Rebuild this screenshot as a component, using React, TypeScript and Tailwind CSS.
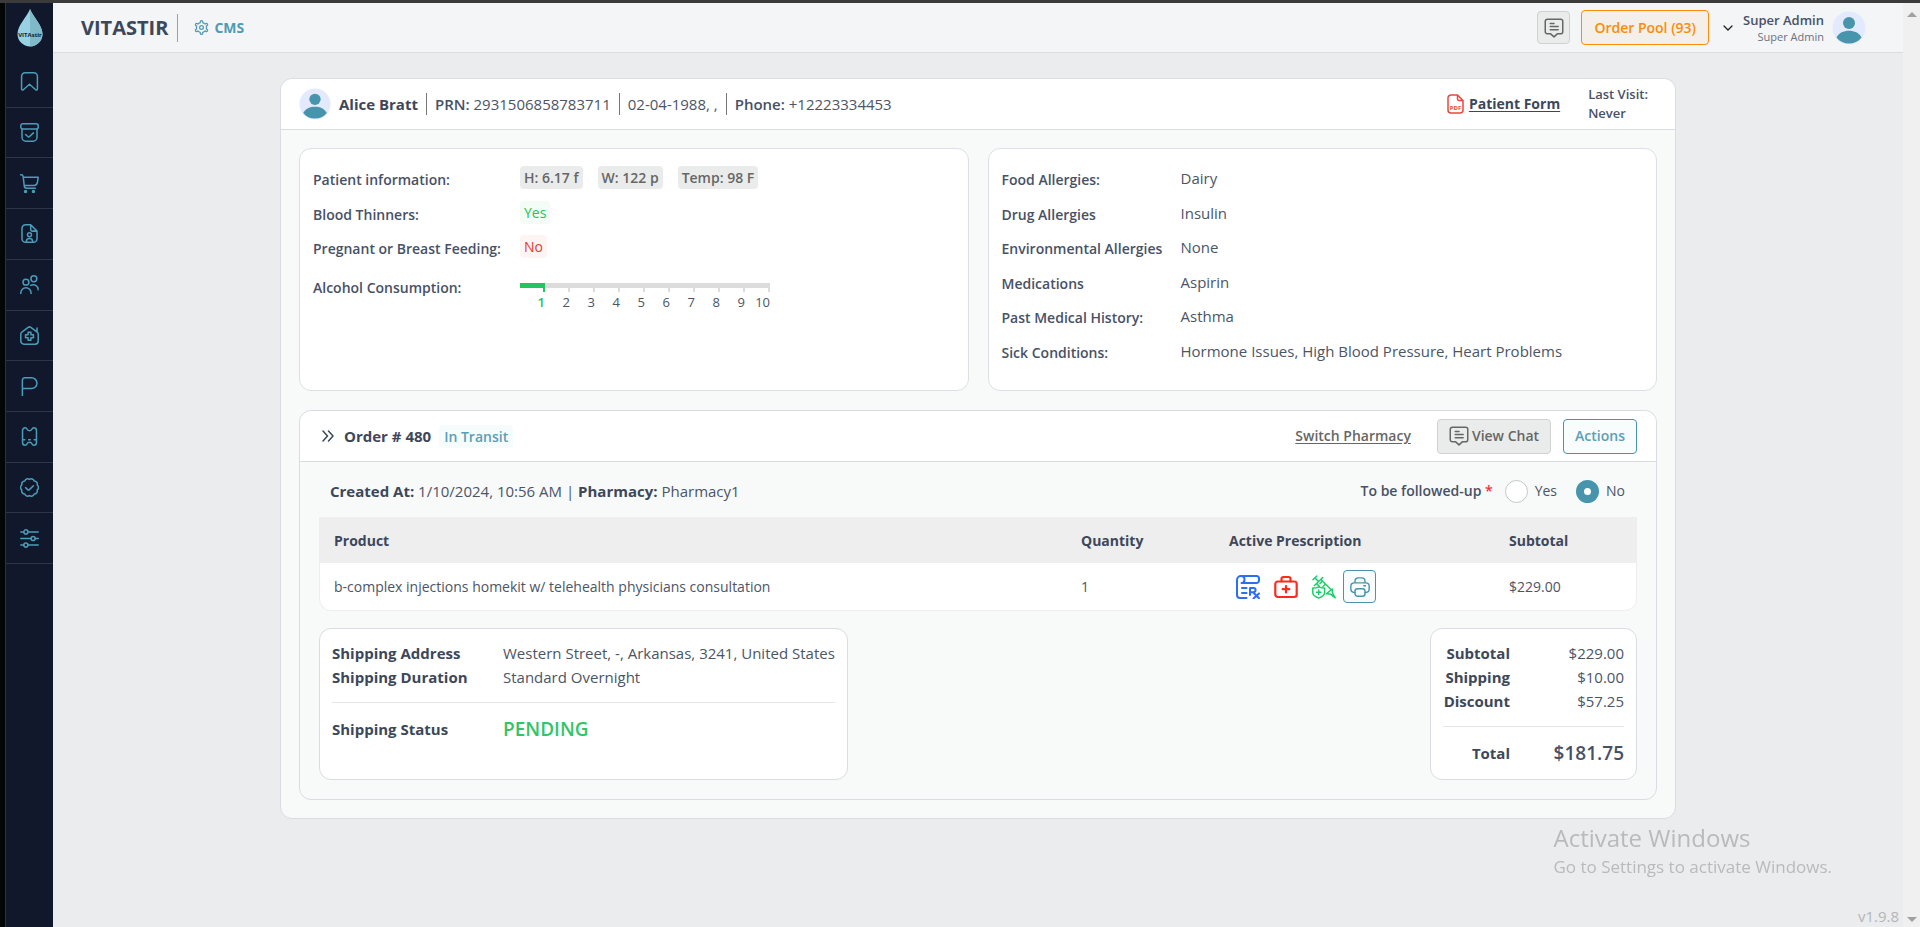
import type { ReactNode } from "react";

const scallops = (() => {
  const count = 10;
  const points = Array.from({ length: count }, (_, i) => {
    const a = (Math.PI * 2 * (i + 0.5)) / count;
    return `${(12 + 10.2 * Math.cos(a)).toFixed(2)} ${(12 + 10.2 * Math.sin(a)).toFixed(2)}`;
  });
  return `M${points[count - 1]}` + points.map((p) => `A3.9 3.9 0 0 1 ${p}`).join("") + "Z";
})();

function Line({ children, className = "size-[19px]", width = 1.9 }: { children: ReactNode; className?: string; width?: number }) {
  return (
    <svg
      viewBox="0 0 24 24"
      className={className}
      fill="none"
      stroke="currentColor"
      strokeWidth={width}
      strokeLinecap="round"
      strokeLinejoin="round"
      aria-hidden="true"
    >
      {children}
    </svg>
  );
}

const navItems: { label: string; icon: ReactNode }[] = [
  {
    label: "Bookmarks",
    icon: <path d="M2 5.500a4.500 4.500 0 0 1 4.500-4.500h11a4.500 4.500 0 0 1 4.500 4.500v16a1.300 1.300 0 0 1-2.200.900L12 15.500l-7.800 6.900A1.300 1.300 0 0 1 2 21.500z" />,
  },
  {
    label: "Orders",
    icon: (
      <>
        <rect x="1" y="1" width="22" height="6.500" rx="2.500" />
        <path d="M2.500 7.500V18a5 5 0 0 0 5 5h9a5 5 0 0 0 5-5V7.500M7 14.500l2.800 2.600a1.600 1.600 0 0 0 2.200 0l5-4.600" />
      </>
    ),
  },
  {
    label: "Cart",
    icon: (
      <>
        <path d="M.8 1h.6a2.600 2.600 0 0 1 2.600 2.300l1.400 11.900A2.900 2.900 0 0 0 8.300 18H19.500M4.200 4H23l-1 6.500a4.500 4.500 0 0 1-4.400 3.900H5.400" />
        <circle cx="7" cy="22.200" r="1.200" fill="currentColor" />
        <circle cx="17" cy="22.200" r="1.200" fill="currentColor" />
      </>
    ),
  },
  {
    label: "Patient files",
    icon: (
      <>
        <path d="M13.500 1H7a4.500 4.500 0 0 0-4.500 4.500v13A4.500 4.500 0 0 0 7 23h10a4.500 4.500 0 0 0 4.500-4.500V9zM13.500 1v5.500A2.500 2.500 0 0 0 16 9h5.500" />
        <circle cx="12" cy="13.700" r="2.500" />
        <path d="M8 23v-.600a4 4 0 0 1 8 0v.600" />
      </>
    ),
  },
  {
    label: "Users",
    icon: (
      <>
        <circle cx="7.500" cy="9" r="3.700" />
        <path d="M1 23.500v-.800a6.500 6.500 0 0 1 13 0v.800M13.600 13.200a6.200 6.200 0 0 1 9.400 5.300" />
        <circle cx="17.500" cy="4.700" r="3.700" />
      </>
    ),
  },
  {
    label: "Clinics",
    icon: (
      <>
        <path d="M1 10.500a4 4 0 0 1 1.700-3.200l7.600-5.600a3 3 0 0 1 3.400 0l7.600 5.600A4 4 0 0 1 23 10.500V19a4 4 0 0 1-4 4H5a4 4 0 0 1-4-4zM21.500 7.200V2.500" />
        <path d="M10.200 8h3.600v3.200H17v3.600h-3.200V18h-3.600v-3.200H7v-3.600h3.200z" />
      </>
    ),
  },
  { label: "Pharmacies", icon: <path d="M3 23.500V4a3 3 0 0 1 3-3h8.600a6.800 6.800 0 0 1 0 13.600H3" /> },
  {
    label: "Coupons",
    icon: (
      <>
        <path d="M3.200 4.500C3.200 2.500 4.700 1 6.500 1c1 0 1.900.600 2.300 1.500a3.500 3.500 0 0 0 6.400 0C15.600 1.600 16.500 1 17.500 1c1.800 0 3.300 1.500 3.300 3.500v15c0 2-1.500 3.500-3.300 3.500-1 0-1.900-.600-2.300-1.500a3.500 3.500 0 0 0-6.400 0C8.400 22.400 7.500 23 6.500 23c-1.800 0-3.300-1.500-3.300-3.500z" />
        <path d="M3.500 16h2.500M11 16h2M18 16h2.500" />
      </>
    ),
  },
  {
    label: "Approvals",
    icon: (
      <>
        <path d={scallops} />
        <path d="M7 12.200l2.700 2.500a1.600 1.600 0 0 0 2.200 0l5.100-4.900" />
      </>
    ),
  },
  {
    label: "Settings",
    icon: (
      <>
        <path d="M1 3.700h3.800M10 3.700h13M1 12h13M19.200 12H23M1 20.300h3.800M10 20.300h13" />
        <circle cx="7.400" cy="3.700" r="2.600" />
        <circle cx="16.600" cy="12" r="2.600" />
        <circle cx="7.400" cy="20.300" r="2.600" />
      </>
    ),
  },
];

function Logo() {
  return (
    <svg viewBox="0 0 26 38" className="h-[38px] w-[26px] overflow-visible" role="img" aria-label="VITAstir">
      <path d="M13 0C10 7.500.5 16.500.5 25a12.500 12.500 0 0 0 25 0C25.500 16.500 16 7.500 13 0z" fill="#97d1e3" />
      <path d="M13 0c3 7.500 12.500 16.500 12.500 25A12.500 12.500 0 0 1 13 37.500z" fill="#7fb9c8" />
      <text x="13" y="28" textAnchor="middle" fontSize="6" fontWeight="700" fill="#14222b" fontFamily="Open Sans, sans-serif">
        VITAstir
      </text>
    </svg>
  );
}

function Gear() {
  return (
    <svg viewBox="0 0 24 24" className="size-[15px]" fill="currentColor" aria-hidden="true">
      <path d="M12,8a4,4,0,1,0,4,4A4,4,0,0,0,12,8Zm0,6a2,2,0,1,1,2-2A2,2,0,0,1,12,14Z" />
      <path d="M21.294,13.9l-.444-.256a9.1,9.1,0,0,0,0-3.29l.444-.256a3,3,0,1,0-3-5.2l-.445.257A8.977,8.977,0,0,0,15,3.513V3A3,3,0,0,0,9,3v.513A8.977,8.977,0,0,0,6.152,5.159L5.705,4.9a3,3,0,0,0-3,5.2l.444.256a9.1,9.1,0,0,0,0,3.29l-.444.256a3,3,0,1,0,3,5.2l.445-.257A8.977,8.977,0,0,0,9,20.487V21a3,3,0,0,0,6,0v-.513a8.977,8.977,0,0,0,2.848-1.646l.447.258a3,3,0,0,0,3-5.2Zm-2.548-3.776a7.048,7.048,0,0,1,0,3.75,1,1,0,0,0,.464,1.133l1.084.626a1,1,0,0,1-1,1.733l-1.086-.628a1,1,0,0,0-1.215.165,6.984,6.984,0,0,1-3.243,1.875,1,1,0,0,0-.751.969V21a1,1,0,0,1-2,0V19.748a1,1,0,0,0-.751-.969A6.984,6.984,0,0,1,7.006,16.9a1,1,0,0,0-1.215-.165l-1.084.627a1,1,0,1,1-1-1.732l1.084-.626a1,1,0,0,0,.464-1.133,7.048,7.048,0,0,1,0-3.75A1,1,0,0,0,4.79,8.992L3.706,8.366a1,1,0,0,1,1-1.733l1.086.628A1,1,0,0,0,7.006,7.1a6.984,6.984,0,0,1,3.243-1.875A1,1,0,0,0,11,4.252V3a1,1,0,0,1,2,0V4.252a1,1,0,0,0,.751.969A6.984,6.984,0,0,1,16.994,7.1a1,1,0,0,0,1.215.165l1.084-.627a1,1,0,1,1,1,1.732l-1.084.626A1,1,0,0,0,18.746,10.125Z" />
    </svg>
  );
}

function ChatIcon() {
  return (
    <Line className="size-5 shrink-0" width={1.8}>
      <path d="M4 1.500h16A2.500 2.500 0 0 1 22.500 4v12.500a2.500 2.500 0 0 1-2.500 2.500H16L12 22.700 8 19H4a2.500 2.500 0 0 1-2.500-2.500V4A2.500 2.500 0 0 1 4 1.500z" />
      <path d="M7.500 6.500h4.500M7.500 10.200h9.500M7.500 14h9.500" />
    </Line>
  );
}

function Avatar({ className }: { className: string }) {
  return (
    <svg viewBox="0 0 34 34" className={className} role="img" aria-label="Avatar">
      <circle cx="17" cy="17" r="16.500" fill="#e4eafe" />
      <circle cx="17" cy="12" r="6" fill="#4795ad" />
      <path d="M4.500 26.500C7 21.800 11.500 19.800 17 19.800s10 2 12.500 6.700C26.500 30.500 22 32.500 17 32.500S7.500 30.500 4.500 26.500z" fill="#4795ad" />
    </svg>
  );
}

function PdfIcon() {
  return (
    <svg viewBox="0 0 17 20" className="h-5 w-[17px]" fill="none" stroke="#e8483f" strokeWidth="1.500" strokeLinejoin="round" aria-hidden="true">
      <path d="M10.500 1H4a3 3 0 0 0-3 3v12a3 3 0 0 0 3 3h9a3 3 0 0 0 3-3V6.500zM10.500 1v4A1.500 1.500 0 0 0 12 6.500h4" />
      <text x="8.500" y="15.500" textAnchor="middle" fontSize="6" fontWeight="700" fill="#e8483f" stroke="none" fontFamily="Open Sans, sans-serif">
        PDF
      </text>
    </svg>
  );
}

function RxIcon() {
  return (
    <Line className="size-6" width={2}>
      <path d="M5 1h15.500a2.500 2.500 0 0 1 2.500 3v1.500A2.700 2.700 0 0 1 20.300 8H7.500M5 1A4 4 0 0 0 1 5v15a3 3 0 0 0 3 3h6.500M5 1c2.500 0 3.500 1.500 3.500 3.500S7.500 8 5.500 8" />
      <path d="M6 13h4.500M6 18h4.500M14 20v-7h3.500a2 2 0 0 1 0 4.200H14M17 17.200l6 6M23 18.500l-5.500 5" />
    </Line>
  );
}

function KitIcon() {
  return (
    <Line className="size-6" width={2.2}>
      <rect x="1.300" y="6.500" width="21.400" height="15.500" rx="2.500" />
      <path d="M7.500 6.500V4A2 2 0 0 1 9.500 2h5a2 2 0 0 1 2 2v2.500M12 11v6.500M8.700 14.200h6.600" />
    </Line>
  );
}

function SyringeIcon() {
  return (
    <Line className="size-6" width={1.500}>
      <path d="M1 4.800L4.800 1M2.900 2.900l3.600 3.600M2.500 10.500l8.300-8M4.500 8.600l2.800 2.600M8.800 4.500l10.700 10.500M10 6.500L8 8.500M13 9.500l-2 2M14.300 18.800l6-4.800M14.500 18.600l4 .600 4.700 3.600-2.700-4.800-.400-3.800" />
      <path d="M6.700 11.800c-1.900 1-3.800 1.300-5.900 1.300v4.400c0 2.900 2.900 4.500 5.900 5.600 3-1.100 5.900-2.700 5.900-5.600v-4.400c-2.100 0-4-.300-5.900-1.300zM6.700 15v4.600M4.400 17.300H9" />
    </Line>
  );
}

function PrinterIcon() {
  return (
    <Line className="size-5" width={1.700}>
      <path d="M6 7V5a4 4 0 0 1 4-4h4a4 4 0 0 1 4 4v2M6 18.500H5a4 4 0 0 1-4-4V11a4 4 0 0 1 4-4h14a4 4 0 0 1 4 4v3.500a4 4 0 0 1-4 4h-1" />
      <rect x="6" y="14" width="12" height="9" rx="3" />
      <path d="M16.500 10.500h2" />
    </Line>
  );
}

const allergies = [
  ["Food Allergies:", "Dairy"],
  ["Drug Allergies", "Insulin"],
  ["Environmental Allergies", "None"],
  ["Medications", "Aspirin"],
  ["Past Medical History:", "Asthma"],
  ["Sick Conditions:", "Hormone Issues, High Blood Pressure, Heart Problems"],
];

const levels = [1, 2, 3, 4, 5, 6, 7, 8, 9, 10];

function Chip({ tone, children }: { tone: string; children: ReactNode }) {
  return <span className={`rounded px-1 text-sm leading-[23px] ${tone}`}>{children}</span>;
}

function PatientPanel() {
  return (
    <section className="grid grid-cols-[207px_1fr] content-start rounded-xl border border-[#dcdfe3] bg-white px-[13px] pt-[14px] text-sm">
      <span className="pt-[7px] font-semibold text-[#475166]">Patient information:</span>
      <div className="flex h-[35px] items-start gap-[15px] pt-[3px]">
        <Chip tone="bg-[#eaeceb] font-semibold text-[#666]">H: 6.17 f</Chip>
        <Chip tone="bg-[#eaeceb] font-semibold text-[#666]">W: 122 p</Chip>
        <Chip tone="bg-[#eaeceb] font-semibold text-[#666]">Temp: 98 F</Chip>
      </div>
      <span className="pt-[7px] font-semibold text-[#475166]">Blood Thinners:</span>
      <div className="flex h-[34px] items-start pt-[3px]">
        <Chip tone="bg-[#f3fcf7] text-[#22c55e]">Yes</Chip>
      </div>
      <span className="pt-[7px] font-semibold text-[#475166]">Pregnant or Breast Feeding:</span>
      <div className="flex h-[35px] items-start pt-[3px]">
        <Chip tone="bg-[#fef4f3] text-[#e23b30]">No</Chip>
      </div>
      <span className="pt-[11px] font-semibold text-[#475166]">Alcohol Consumption:</span>
      <ol className="flex pt-4">
        {levels.map((n) => (
          <li key={n} className="w-[25px]">
            <div className={n === 1 ? "h-[5px] bg-[#22c55e]" : "h-[5px] bg-[#dcdcdc]"} />
            <div className={n === 1 ? "h-1 border-r-2 border-[#22c55e]" : "h-1 border-r-2 border-[#dcdcdc]"} />
            <div className={n === 1 ? "text-right text-[13px] leading-5 font-semibold text-[#22c55e]" : "text-right text-[13px] leading-5 text-[#4b5565]"}>
              {n}
            </div>
          </li>
        ))}
      </ol>
    </section>
  );
}

function AllergyPanel() {
  return (
    <section className="rounded-xl border border-[#dcdfe3] bg-white px-[13px] pt-[14px] pb-5">
      <dl className="grid h-[207px] auto-rows-fr grid-cols-[179px_1fr]">
        {allergies.map(([label, value]) => (
          <div key={label} className="contents">
            <dt className="pt-[7px] text-sm font-semibold text-[#475166]">{label}</dt>
            <dd className="pt-1 text-[15px] leading-[22px] text-[#4b5565]">{value}</dd>
          </div>
        ))}
      </dl>
    </section>
  );
}

function Radio({ label, checked }: { label: string; checked?: boolean }) {
  return (
    <label className="flex items-center gap-[7px] text-sm text-[#4b5565]">
      <input
        type="radio"
        name="follow-up"
        defaultChecked={checked}
        className="size-[23px] appearance-none rounded-full border border-[#c4c7ca] bg-white checked:border-8 checked:border-[#4795ad]"
      />
      {label}
    </label>
  );
}

function OrderPanel() {
  return (
    <section className="mt-[19px] rounded-xl border border-[#d9dce1] bg-[#f8faf9]">
      <div className="flex h-[51px] items-center rounded-t-xl border-b border-[#d9dce1] bg-white pr-[19px] pl-[21px]">
        <button type="button" aria-label="Collapse order" className="text-[#3d475a]">
          <svg viewBox="0 0 14 12" className="h-3 w-[14px]" fill="none" stroke="currentColor" strokeWidth="1.500" strokeLinecap="round" strokeLinejoin="round">
            <path d="M2 1l4.500 5L2 11M7.500 1L12 6l-4.500 5" />
          </svg>
        </button>
        <h2 className="ml-[9px] text-[15px] font-bold">Order # 480</h2>
        <span className="ml-2 rounded bg-[#f6fbfc] px-[5px] text-sm leading-[23px] font-semibold text-[#5a9fb5]">In Transit</span>
        <div className="ml-auto flex items-center">
          <a href="#switch" className="mr-[26px] text-sm font-semibold text-[#666] underline underline-offset-2">
            Switch Pharmacy
          </a>
          <button type="button" className="mr-3 flex h-[35px] items-center gap-[3px] rounded border border-[#cfd2d1] bg-[#eaeceb] px-[11px] text-sm font-semibold text-[#666]">
            <ChatIcon />
            View Chat
          </button>
          <button type="button" className="h-[35px] rounded border border-[#4795ad] bg-[#f8fcfd] px-[11px] text-sm font-semibold text-[#5a9fb5]">
            Actions
          </button>
        </div>
      </div>

      <div className="px-[19px] pb-[19px]">
        <div className="flex h-[55px] items-center justify-between pt-[3px] pr-3 pl-[11px]">
          <p className="text-[15px] text-[#4b5565]">
            <b className="font-bold text-[#3d475a]">Created At:</b> 1/10/2024, 10:56 AM | <b className="font-bold text-[#3d475a]">Pharmacy:</b> Pharmacy1
          </p>
          <div role="radiogroup" aria-labelledby="follow-up-label" className="flex items-center gap-[19px]">
            <div className="flex items-center gap-3">
              <span id="follow-up-label" className="text-sm font-semibold text-[#475166]">
                To be followed-up <span className="text-red-500">*</span>
              </span>
              <Radio label="Yes" />
            </div>
            <Radio label="No" checked />
          </div>
        </div>

        <div className="overflow-hidden rounded-b-xl border border-[#eeeeee] bg-white">
          <table className="w-full table-fixed text-left text-sm">
            <thead className="bg-[#eeeeee]">
              <tr className="h-[45px]">
                <th className="px-[14px] font-bold">Product</th>
                <th className="w-[148px] px-[14px] font-bold">Quantity</th>
                <th className="w-[280px] px-[14px] font-bold">Active Prescription</th>
                <th className="w-[141px] px-[14px] font-bold">Subtotal</th>
              </tr>
            </thead>
            <tbody className="text-[#4b5565]">
              <tr className="h-[47px]">
                <td className="px-[14px]">b-complex injections homekit w/ telehealth physicians consultation</td>
                <td className="px-[14px]">1</td>
                <td className="px-[14px]">
                  <div className="flex items-center pl-[7px]">
                    <button type="button" aria-label="Prescription" className="mr-[14px] text-[#2970f5]">
                      <RxIcon />
                    </button>
                    <button type="button" aria-label="Medical kit" className="mr-[14px] text-[#ff2a1f]">
                      <KitIcon />
                    </button>
                    <button type="button" aria-label="Injection" className="mr-[7px] text-[#17cf6a]">
                      <SyringeIcon />
                    </button>
                    <button type="button" aria-label="Print" className="flex size-[33px] items-center justify-center rounded border border-[#4795ad] bg-[#f8fcfd] text-[#4795ad]">
                      <PrinterIcon />
                    </button>
                  </div>
                </td>
                <td className="px-[14px]">$229.00</td>
              </tr>
            </tbody>
          </table>
        </div>

        <div className="mt-[17px] flex items-stretch justify-between text-[15px] leading-6 text-[#4b5565]">
          <dl className="rounded-xl border border-[#d9dce1] bg-white px-3 pt-3 pb-[38px]">
            <div className="grid grid-cols-[171px_1fr]">
              <dt className="font-bold text-[#3d475a]">Shipping Address</dt>
              <dd>Western Street, -, Arkansas, 3241, United States</dd>
              <dt className="font-bold text-[#3d475a]">Shipping Duration</dt>
              <dd>Standard Overnight</dd>
            </div>
            <div className="mt-[13px] grid grid-cols-[171px_1fr] border-t border-[#e3e5e8] pt-[14px]">
              <dt className="font-bold text-[#3d475a]">Shipping Status</dt>
              <dd className="text-[19px] leading-6 font-semibold text-[#2fc667]">PENDING</dd>
            </div>
          </dl>
          <dl className="rounded-xl border border-[#d9dce1] bg-white px-3 pt-3 pb-[14px] text-right">
            <div className="grid grid-cols-[67px_114px]">
              <dt className="font-bold text-[#3d475a]">Subtotal</dt>
              <dd>$229.00</dd>
              <dt className="font-bold text-[#3d475a]">Shipping</dt>
              <dd>$10.00</dd>
              <dt className="font-bold text-[#3d475a]">Discount</dt>
              <dd>$57.25</dd>
            </div>
            <div className="mt-[13px] grid grid-cols-[67px_114px] border-t border-[#e3e5e8] pt-[14px]">
              <dt className="font-bold text-[#3d475a]">Total</dt>
              <dd className="text-[19px] leading-6 font-semibold text-[#475166]">$181.75</dd>
            </div>
          </dl>
        </div>
      </div>
    </section>
  );
}

export default function App() {
  return (
    <div className="flex min-h-screen flex-col bg-[#ebecee] font-['Open_Sans',sans-serif] text-[#3d475a]">
      <div className="h-[3px] bg-[#3b3b3b]" />
      <div className="flex flex-1">
        <div className="w-[6px] border-r border-[#2f3333] bg-[#020705]" />
        <nav aria-label="Main" className="flex w-[47px] flex-col items-center bg-[#12182b] pt-[6px] text-[#4a9db8]">
          <Logo />
          <ul className="mt-[10px] flex h-[507px] w-full flex-col">
            {navItems.map((item) => (
              <li key={item.label} className="flex-1 border-b border-[#2f3548]">
                <a href="#nav" aria-label={item.label} className="flex h-full items-center justify-center">
                  <Line>{item.icon}</Line>
                </a>
              </li>
            ))}
          </ul>
        </nav>

        <div className="flex flex-1 flex-col">
          <header className="flex h-[50px] items-center border-b border-[#dadcde] bg-[#f4f5f7] pr-[37px] pl-7">
            <h1 className="text-xl font-bold">VITASTIR</h1>
            <div className="ml-[9px] h-7 w-px bg-slate-400" />
            <a href="#cms" className="ml-4 flex items-center gap-[5px] text-sm font-bold text-[#4f9bb2]">
              <Gear />
              CMS
            </a>
            <button type="button" aria-label="Messages" className="ml-auto flex size-[33px] items-center justify-center rounded border border-[#cfd2d1] bg-[#eaeceb] text-[#666]">
              <ChatIcon />
            </button>
            <button type="button" className="ml-[11px] h-[35px] rounded border border-[#fb8c0a] bg-[#f5efe9] px-3 text-sm font-semibold text-[#fb8c0a]">
              Order Pool (93)
            </button>
            <button type="button" className="ml-[14px] flex items-center">
              <svg viewBox="0 0 10 6" className="h-[6px] w-[10px]" fill="none" stroke="#222" strokeWidth="1.300" strokeLinecap="round">
                <path d="M1 1l4 4 4-4" />
              </svg>
              <span className="ml-[10px] text-right">
                <span className="block text-[13px] leading-[18px] font-semibold text-[#475166]">Super Admin</span>
                <span className="block text-[11px] leading-4 text-gray-500">Super Admin</span>
              </span>
              <Avatar className="ml-2 size-[34px]" />
            </button>
          </header>

          <main className="flex-1 px-6 pt-[25px]">
            <article className="mx-auto w-full max-w-[1396px] rounded-xl border border-[#d9dce1] bg-[#f8faf9]">
              <div className="flex h-[51px] items-center rounded-t-xl border-b border-[#d9dce1] bg-white pr-[27px] pl-[18px] text-[15px]">
                <Avatar className="size-8" />
                <span className="ml-2 font-bold">Alice Bratt</span>
                <span className="mx-2 h-[22px] w-px bg-[#777]" />
                <span className="text-[#4b5565]">
                  <b className="font-semibold text-[#475166]">PRN:</b> 2931506858783711
                </span>
                <span className="mx-2 h-[22px] w-px bg-[#777]" />
                <span className="text-[#4b5565]">02-04-1988, ,</span>
                <span className="mx-2 h-[22px] w-px bg-[#777]" />
                <span className="text-[#4b5565]">
                  <b className="font-semibold text-[#475166]">Phone:</b> +12223334453
                </span>
                <a href="#form" className="ml-auto flex items-center gap-[5px] text-sm font-bold underline underline-offset-2">
                  <PdfIcon />
                  Patient Form
                </a>
                <p className="ml-7 text-[13px] leading-[19px] font-semibold text-[#475166]">
                  Last Visit:
                  <br />
                  Never
                </p>
              </div>
              <div className="px-[18px] py-[18px]">
                <div className="grid grid-cols-2 gap-[19px]">
                  <PatientPanel />
                  <AllergyPanel />
                </div>
                <OrderPanel />
              </div>
            </article>
          </main>
          <footer className="pr-1 pb-[2px] text-right text-[15px] leading-[18px] text-[#b4b5b7]">v1.9.8</footer>
        </div>

        <div className="flex w-[17px] flex-col items-center justify-between bg-[#f0f0f0] pt-[9px] pb-[5px] text-[#a0a0a0]">
          <svg viewBox="0 0 10 5" className="h-[5px] w-[10px]" fill="currentColor" aria-hidden="true">
            <path d="M0 5l5-5 5 5z" />
          </svg>
          <svg viewBox="0 0 10 5" className="h-[5px] w-[10px]" fill="currentColor" aria-hidden="true">
            <path d="M0 0l5 5 5-5z" />
          </svg>
        </div>
      </div>

      <div className="pointer-events-none fixed right-[88px] bottom-[48px] text-[#b9babb]">
        <p className="text-2xl leading-[34px]">Activate Windows</p>
        <p className="text-[17px] leading-6">Go to Settings to activate Windows.</p>
      </div>
    </div>
  );
}
